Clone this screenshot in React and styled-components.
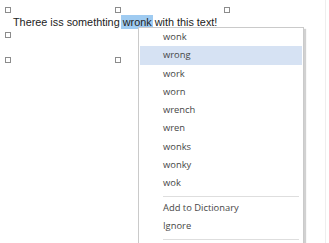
import React from 'react';
import styled, { createGlobalStyle } from 'styled-components';

const GlobalStyle = createGlobalStyle`
  html, body {
    margin: 0;
    padding: 0;
    background: #ffffff;
  }
`;

const suggestions = ['wonk', 'wrong', 'work', 'worn', 'wrench', 'wren', 'wonks', 'wonky', 'wok'];
const handles = [
  ['0%', '0%'], ['50%', '0%'], ['100%', '0%'],
  ['0%', '50%'], ['100%', '50%'],
  ['0%', '100%'], ['50%', '100%'], ['100%', '100%'],
];

const App = () => {
  return (
    <Page>
      <GlobalStyle />
      <Frame>
        {handles.map(([x, y]) => (
          <Handle key={x + y} $x={x} $y={y} />
        ))}
        <Text>
          Theree iss somethting <Selected>wronk</Selected> with this text!
        </Text>
      </Frame>
      <Menu>
        {suggestions.map((word) => (
          <Item key={word} $active={word === 'wrong'}>
            {word}
          </Item>
        ))}
        <Separator />
        <Item>Add to Dictionary</Item>
        <Item>Ignore</Item>
        <Separator />
      </Menu>
    </Page>
  );
};

const Page = styled.div`
  position: relative;
  width: 326px;
  height: 243px;
  overflow: hidden;
  box-sizing: border-box;
  padding: 10px 0 0 8px;
  border-right: 1px solid #eeeeee;
  background: #ffffff;
`;

const Frame = styled.div`
  position: relative;
  width: 219px;
  height: 50px;
  box-sizing: border-box;
  padding: 5px 0 0 5px;
`;

const Handle = styled.span`
  position: absolute;
  left: calc(${(props) => props.$x} - 3px);
  top: calc(${(props) => props.$y} - 3px);
  width: 6px;
  height: 6px;
  box-sizing: border-box;
  border: 1px solid #8c8c8c;
  background: #ffffff;
`;

const Text = styled.div`
  font-family: 'Liberation Sans', Arial, sans-serif;
  font-size: 10.85px;
  line-height: 14px;
  color: #222222;
  white-space: nowrap;
`;

const Selected = styled.span`
  display: inline-block;
  background: #9fcbf1;
  padding: 0 1.5px;
  margin: 0 -1.5px;
`;

const Menu = styled.div`
  position: absolute;
  left: 138px;
  top: 27px;
  width: 166px;
  height: 240px;
  box-sizing: border-box;
  display: flex;
  flex-direction: column;
  background: #ffffff;
  border: 1px solid #cacaca;
  box-shadow: 2px 2px 1px rgba(0, 0, 0, 0.18);
  font-family: 'Open Sans', 'Noto Sans', sans-serif;
  font-size: 9.4px;
  color: #474747;
`;

const Item = styled.div`
  flex: 0 0 18.3px;
  line-height: 18.3px;
  margin: 0 1px;
  padding-left: 23px;
  background: ${(props) => (props.$active ? '#d6e2f3' : 'transparent')};
  white-space: nowrap;
`;

const Separator = styled.div`
  flex: 0 0 1px;
  margin: 3px 4px 2.3px 24px;
  background: #dedede;
`;

export default App;
